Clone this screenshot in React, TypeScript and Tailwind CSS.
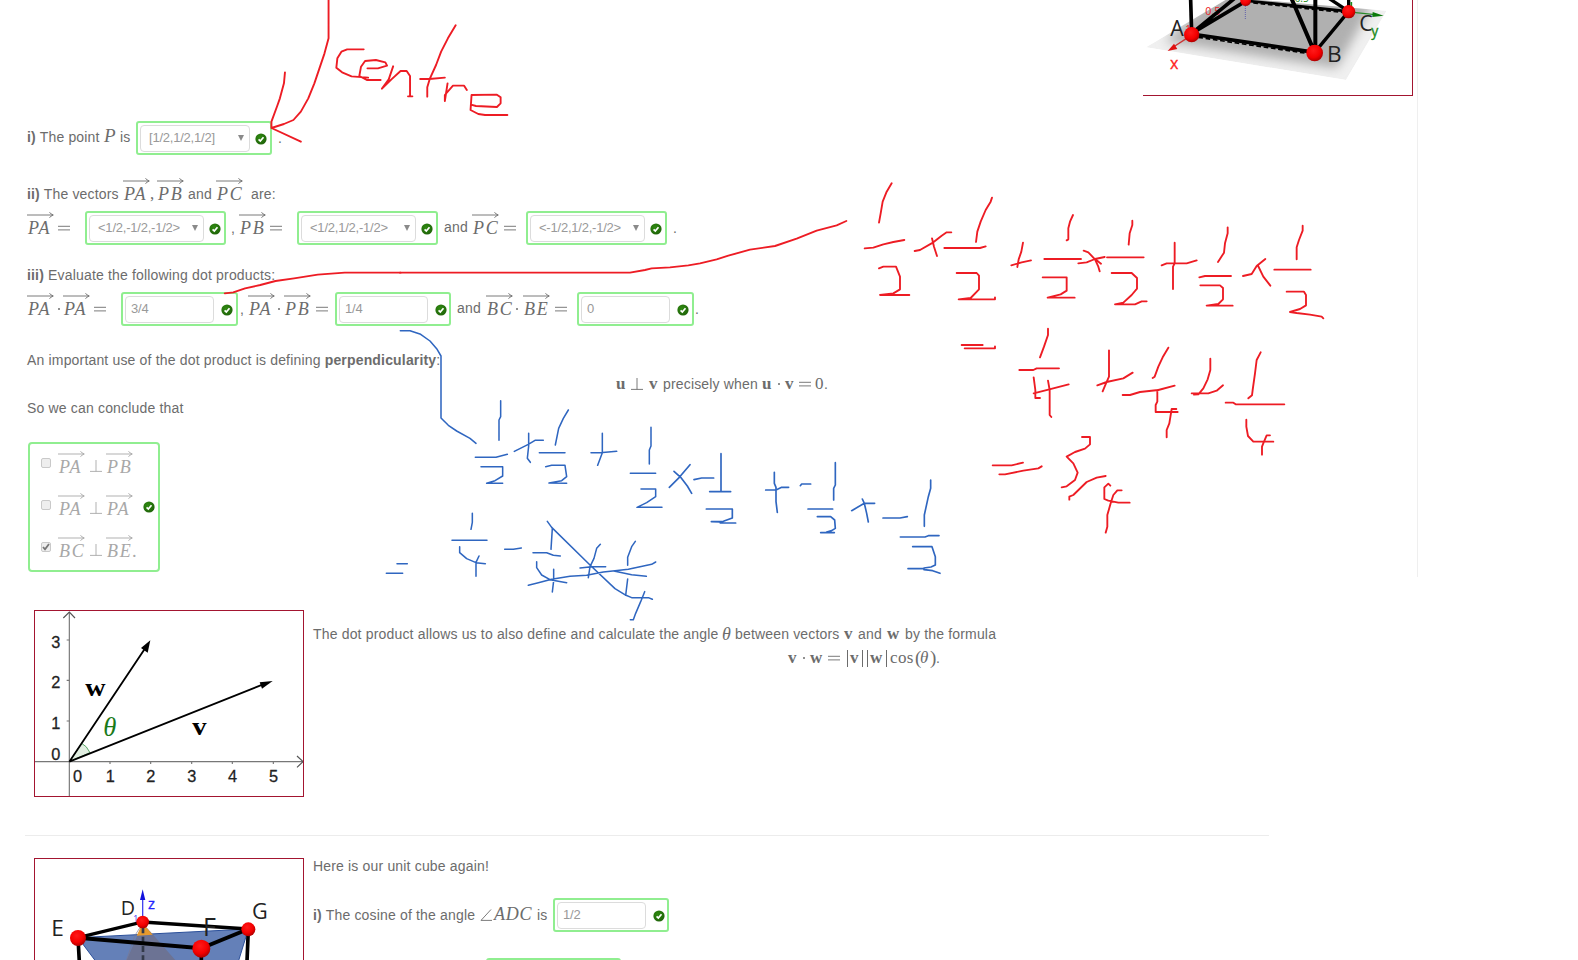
import React from "react";

type Kids = { children?: React.ReactNode; className?: string };

const Check = ({ className = "" }: { className?: string }) => (
  <svg className={`h-3 w-3 shrink-0 ${className}`} viewBox="0 0 12 12">
    <defs>
      <radialGradient id="checkFill" cx="0.4" cy="0.35" r="0.75">
        <stop offset="0" stopColor="#2f8a10" />
        <stop offset="1" stopColor="#1d5f08" />
      </radialGradient>
    </defs>
    <circle cx="6" cy="6" r="5.6" fill="url(#checkFill)" />
    <path d="M3.6 6.3 5.3 8 8.5 4.2" fill="none" stroke="#fff" strokeWidth="1.7" />
  </svg>
);

const Frame = ({ children, className = "" }: Kids) => (
  <div className={`box-border flex h-[34px] shrink-0 items-start rounded-[3px] border-2 border-[#90ee90] bg-white pt-0.5 pl-0.5 ${className}`}>
    {children}
  </div>
);

const Select = ({ value, className = "" }: { value: string; className?: string }) => (
  <Frame className={className}>
    <div className="box-border flex h-[27px] flex-1 items-center justify-between rounded-[4px] border border-[#dcdcdc] pr-[5px] pb-[2px] pl-[8px] text-[13px] leading-5 tracking-[-0.22px] text-[#999]">
      <span>{value}</span>
      <svg className="h-[6px] w-[6px]" viewBox="0 0 6 6">
        <path d="M0 0H6L3 6Z" fill="#8a8a8a" />
      </svg>
    </div>
    <Check className="mt-[8px] mr-[3px] ml-[5px]" />
  </Frame>
);

const Input = ({ value, className = "" }: { value: string; className?: string }) => (
  <Frame className={className}>
    <div className="box-border flex h-[27px] w-[89px] items-center rounded-[4px] border border-[#dcdcdc] pb-[2px] pl-[5px] text-[13px] leading-5 tracking-[-0.22px] text-[#999]">
      {value}
    </div>
    <Check className="mt-[8px] ml-[7px]" />
  </Frame>
);

const T = ({ children, className = "" }: Kids) => (
  <span className={`block shrink-0 whitespace-pre text-[14px] leading-5 tracking-[0.17px] ${className}`}>{children}</span>
);

const M = ({ children, className = "" }: Kids) => (
  <span className={`-mt-px block shrink-0 whitespace-pre font-['Liberation_Serif',serif] text-[17px] leading-5 ${className}`}>
    {children}
  </span>
);

const Vec = ({ children, className = "w-[27px]" }: Kids) => (
  <span className={`-mt-px flex shrink-0 flex-col pb-[6px] ${className}`}>
    <svg className="h-[6px] w-[27px]" viewBox="0 0 27 6">
      <path d="M0 3H26M22.5 0.2Q24 2.4 26.3 3Q24 3.6 22.5 5.8" fill="none" stroke="currentColor" strokeWidth="0.9" />
    </svg>
    <span className="pl-px font-['Liberation_Serif',serif] text-[18px] leading-5 tracking-[1.8px] italic">{children}</span>
  </span>
);

const Eq = ({ className = "w-[12px]" }: { className?: string }) => (
  <span className={`block shrink-0 ${className}`}>
    <svg className="h-[6px] w-[12px]" viewBox="0 0 12 6">
      <path d="M0 1.3H12M0 4.9H12" stroke="currentColor" strokeWidth="0.9" />
    </svg>
  </span>
);

const Dot = ({ className = "" }: { className?: string }) => (
  <span className={`block shrink-0 ${className}`}>
    <svg className="h-[2px] w-[2px]" viewBox="0 0 2 2">
      <circle cx="1" cy="1" r="1" fill="currentColor" />
    </svg>
  </span>
);

const Perp = ({ className = "" }: { className?: string }) => (
  <span className={`block shrink-0 ${className}`}>
    <svg className="h-[12px] w-[12px]" viewBox="0 0 12 12">
      <path d="M6 0V11.5M0 11.4H12" stroke="currentColor" strokeWidth="0.9" fill="none" />
    </svg>
  </span>
);

const Choice = ({ a, b, on = false }: { a: string; b: React.ReactNode; on?: boolean }) => (
  <div className="flex h-[42px] items-center pt-[3px] pl-[11px]">
    <span className="mt-[-8px] mr-[7px] flex h-[10px] w-[10px] shrink-0 items-center justify-center rounded-[2px] border border-[#c9c9c9] bg-[#eeeeee]">
      {on && (
        <svg className="h-[8px] w-[8px]" viewBox="0 0 8 8">
          <path d="M1 4 3 6.3 7 1" fill="none" stroke="#777" strokeWidth="1.8" />
        </svg>
      )}
    </span>
    <Vec className="mt-px w-[32px]">{a}</Vec>
    <Perp className="mb-px w-[16px]" />
    <Vec className="mt-px w-[36px]">{b}</Vec>
  </div>
);

const Ball = ({ x, y, r }: { x: number; y: number; r: number }) => <circle cx={x} cy={y} r={r} fill="url(#ball)" />;

const BaseFigure = () => (
  <svg className="block h-[95px] w-[269px] font-['Open_Sans',sans-serif]" viewBox="69 0 807 285">
    <defs>
      <radialGradient id="ball" cx="0.42" cy="0.35" r="0.7">
        <stop offset="0" stopColor="#ff1a1a" />
        <stop offset="0.6" stopColor="#f40000" />
        <stop offset="1" stopColor="#a00000" />
      </radialGradient>
      <filter id="haze" x="-15%" y="-15%" width="130%" height="130%">
        <feGaussianBlur stdDeviation="16" />
      </filter>
      <clipPath id="plane">
        <path d="M78 142L330 -8L800 32L678 240Z" />
      </clipPath>
    </defs>
    <g clipPath="url(#plane)">
      <path d="M78 142L330 -8L800 32L678 240Z" fill="#f0f0f0" />
      <path d="M135 125L320 -50L760 10L650 205Z" fill="#b0b0b0" filter="url(#haze)" />
    </g>
    <path d="M376 0V60" stroke="#3a3aa8" strokeWidth="2" strokeDasharray="3 3" />
    <text x="256" y="44" fontSize="32" fill="#e22">0.5</text>
    <text x="524" y="7" fontSize="30" fill="#1a8a1a">0.5</text>
    <text x="196" y="98" fontSize="30" fill="#e22">1</text>
    <g stroke="#000" fill="none">
      <path d="M212 0L215 100" strokeWidth="11" />
      <path d="M215 100L350 -10M215 100L376 4" strokeWidth="11" />
      <path d="M215 102L584 157" strokeWidth="11" />
      <path d="M235 112L560 160" strokeWidth="5" strokeDasharray="14 8" />
      <path d="M512 -10L584 157M586 0V150" strokeWidth="12" />
      <path d="M584 157L686 34M686 0V34M622 -8L686 34" strokeWidth="10" />
      <path d="M376 2L686 34" strokeWidth="8" />
      <path d="M400 8L670 37" strokeWidth="6" strokeDasharray="14 8" />
    </g>
    <path d="M200 115L160 141" stroke="#c33" strokeWidth="4" />
    <path d="M143 153L162 131L172 147Z" fill="#e01010" />
    <path d="M700 37L765 44" stroke="#2a8a2a" strokeWidth="4" />
    <path d="M791 47L758 36L757 51Z" fill="#0a7a0a" />
    <path d="M694 6V24" stroke="#1a8a1a" strokeWidth="5" />
    <Ball x={215} y={104} r={23} />
    <Ball x={377} y={2} r={16} />
    <Ball x={584} y={159} r={25} />
    <Ball x={686} y={35} r={20} />
    <g fill="#222" fontSize="64">
      <text x="151" y="109">A</text>
      <text x="621" y="187" fontSize="68">B</text>
      <text x="718" y="92">C</text>
    </g>
    <text x="150" y="208" fontSize="48" fill="#f22" stroke="#f22">x</text>
    <text x="754" y="107" fontSize="42" fill="#1a8a1a" stroke="#1a8a1a">y</text>
  </svg>
);

const Graph = () => (
  <svg className="block h-[185px] w-[268px] font-['Liberation_Sans',sans-serif]" viewBox="45 63 804 555">
    <path d="M148 515L185 460Q200 467 210 488Z" fill="#e2efe2" stroke="#3f9a4f" strokeWidth="2.5" />
    <g stroke="#777" strokeWidth="3.5" fill="none">
      <path d="M148 66V618M45 515H849" />
      <path d="M130 84L148 66L165 84M831 498L849 515L831 532" stroke="#555" />
      <path d="M140 150H148M140 271H148M140 393H148M270 515V522M392 515V522M515 515V522M637 515V522M760 515V522" />
    </g>
    <g stroke="#000" strokeWidth="5.5">
      <path d="M148 515L380 168M148 515L735 281" />
    </g>
    <path d="M391 151L383 188L363 174Z" fill="#000" />
    <path d="M758 273L726 296L719 277Z" fill="#000" />
    <g fill="#222" stroke="#222" strokeWidth="0.8" fontSize="49">
      <text x="94" y="175">3</text>
      <text x="94" y="295">2</text>
      <text x="94" y="417">1</text>
      <text x="94" y="509">0</text>
      <text x="159" y="577">0</text>
      <text x="257" y="577">1</text>
      <text x="379" y="577">2</text>
      <text x="502" y="577">3</text>
      <text x="624" y="577">4</text>
      <text x="747" y="577">5</text>
    </g>
    <g className="font-['Liberation_Serif',serif]">
      <text x="196" y="317" fontSize="73" fontWeight="700" textLength="61" lengthAdjust="spacingAndGlyphs">w</text>
      <text x="517" y="434" fontSize="73" fontWeight="700" textLength="43" lengthAdjust="spacingAndGlyphs">v</text>
      <text x="250" y="439" fontSize="80" fontStyle="italic" fill="#1a7a1a">θ</text>
    </g>
  </svg>
);

const CubeFigure = () => (
  <svg className="block h-[101px] w-[268px] font-['Open_Sans',sans-serif]" viewBox="45 117 804 303">
    <path d="M174 353L685 327L655 425H228Z" fill="#6480b8" stroke="#2a4f9a" strokeWidth="3" />
    <path d="M368 310L400 345L470 425H318Z" fill="#6c7394" />
    <path d="M368 310L398 344L350 347Z" fill="#e69a2e" />
    <path d="M368 310L345 346L318 425" fill="none" stroke="#7d7890" strokeWidth="2" />
    <path d="M368 235V300" stroke="#44e" strokeWidth="4" />
    <path d="M368 208L376 240H360Z" fill="#11d" />
    <path d="M369 322V425" stroke="#333a4a" strokeWidth="8" strokeDasharray="18 10" />
    <g stroke="#000" strokeWidth="11" fill="none">
      <path d="M174 353L368 306L685 327" strokeWidth="10" />
      <path d="M174 353L544 385L685 327" strokeWidth="12" />
      <path d="M174 353L178 425M685 327L681 425M544 385V425" />
    </g>
    <text x="340" y="305" fontSize="26" fill="#33e">1</text>
    <Ball x={174} y={354} r={24} />
    <Ball x={368} y={306} r={19} />
    <Ball x={685} y={328} r={21} />
    <Ball x={544} y={386} r={27} />
    <g fill="#222" fontSize="65">
      <text x="94" y="347" fontSize="68">E</text>
      <text x="302" y="285" fontSize="59">D</text>
      <text x="549" y="347" fontSize="75">F</text>
      <text x="696" y="297">G</text>
    </g>
    <text x="384" y="268" fontSize="44" fill="#22f" stroke="#22f">z</text>
  </svg>
);

const redWord =
  "M972 0V115L960 160L945 205L930 250L912 295L890 335L868 360L840 372L803 384M843 217L840 250L828 295L820 318L803 365V384L890 425M1076 148H1027L1010 155L998 175L995 203L1012 217L1040 229L1089 233M1087 205H1118L1145 197L1140 187L1112 180L1080 183L1068 200L1063 228L1085 240H1126M1163 199L1150 238L1130 266L1158 238L1185 213H1203L1213 228V288M1207 289H1220M1348 76L1325 115L1305 155L1290 195L1272 235L1264 262V290M1243 237H1270L1316 233M1324 250L1316 303V285L1340 257H1373L1381 270M1393 314L1408 318L1470 321L1481 310V292L1470 284L1395 285L1392 330L1415 342L1435 345H1501M665 880L690 877L725 865L770 855L815 843L870 835L940 824L1020 818H1185";

const redLine =
  "M0 278H690L735 270L755 265L810 262L865 256L900 250L950 238L985 227L1050 209L1125 198L1190 176L1250 152L1310 136L1339 123";

const redSums =
  "M155 70L140 95L128 125L122 160L117 188M74 265L100 263L130 253L160 246L193 240M117 325L130 320H168L180 350V388L160 400L120 405H208M224 273L240 270L280 247L305 227L320 217H334M276 235L282 260L291 288M456 113L452 125L437 150L422 185L412 215L408 246M313 264H420L437 259M350 339H410L417 347V388L392 414L356 418H465V412M549 248L544 275L536 298L532 321M514 316L545 307L573 301M699 165L690 185L685 205V238L680 241M613 297H723M608 352H680V392L662 403L623 413H704M731 272L745 277L765 298L775 320L779 334M715 310L740 307L765 297L794 291M765 297L783 311M877 182V195L869 220L866 254M801 292H911M815 339H875L891 354V386L875 405L850 428L825 433H885L905 424H920M1004 248V310L999 320V387M965 316L980 310H1040L1070 301M1163 202V220L1155 250L1152 278L1134 306M1078 352L1095 348H1173M1081 376H1140L1149 384V418L1135 432L1100 437H1178M1209 348L1235 342L1250 318L1276 297M1253 315L1270 350L1291 377M1388 197V212L1377 240L1370 262V298M1303 329H1412M1340 395H1392L1398 405V436L1380 447L1350 456L1370 459L1410 464L1445 470L1450 475M365 555H428M374 565H465V559M624 506V525L612 560L600 592M538 630H580L590 625H657M581 652L586 690V714H600M581 700L628 688L686 673M624 662L629 690V765L634 771M807 571V650L798 670L788 694M772 676L800 666L850 655L878 638M985 563L968 592L955 620L944 650L938 654M848 705H870L900 696L955 690L1004 677M952 690V725L947 735V756H1013M1009 747H995L988 790L980 810V832M1111 596V630L1103 658L1090 685L1075 703L1062 704M1055 700H1105L1130 692L1149 676M1262 577L1250 600L1245 640L1238 690L1236 706L1225 715M1157 728H1180L1187 733H1333M1219 779V800L1224 828L1240 845H1300M1290 826H1280L1272 845L1266 860V884M458 916H515L549 908M478 943H495L550 932L595 925L605 919M726 831H750V853L735 866L705 876L680 890L700 910L713 938L705 960L680 979L665 982M688 1019V1010L700 1005L740 966L770 953L797 948M811 977L805 971L793 982V1017L805 1022L835 1028H869M845 991H832L820 1005L812 1030L802 1065V1100L797 1118";

const blueLeft =
  "M91 32H120L152 43L180 63L200 86L213 108V294L235 316L260 333L300 355L318 370M392 242V290L387 300V361M316 412H378L412 403M333 440H398V468L375 482L350 490H398M433 394L475 373L495 361H520M476 340V378L472 415L481 427M595 270L580 295L566 325L556 375M508 398H585M527 440L545 436H585L590 470L575 482L537 489L590 490M697 340V398L683 436M663 398H690L740 394M843 322V378L838 390V432M781 460H857M813 507H857V530L830 548L801 562H876M307 580V607L303 628M246 661H351M269 680V698L290 716L318 728L346 731M327 708L318 727V769M49 760H98M81 731H112M404 688H430L454 684M489 698H530L550 706L571 708M547 625L543 688M500 725V743L515 765L540 779L590 788M551 748V782L547 816M532 604L545 622L660 735L735 806L768 826L785 833H835L847 838M475 796L505 788L545 778L600 769L650 766L700 756L735 752L775 748L810 740L845 733L857 726M735 754L785 764L829 769M691 673L680 685L672 715L660 740L655 773M630 744L665 740H707M796 664L785 680L773 712V736M773 777L767 826M824 815L812 845L797 880L790 899H781";

const blueRight =
  "M270 194L238 232L208 262M222 214L242 232L262 258L275 280M282 239L305 234H341M363 161V275M329 275H392M319 327H397V354L370 364L334 365L360 366L361 369H407M523 217V250L528 262V305L532 337M497 270H528L545 262H566M601 257L605 252H632M706 188V255L701 265V300M624 327H698M652 350H692L704 360L706 385L695 392L680 396M662 398H703M755 332L793 310H824M787 297L793 310L800 340L805 366M849 354H900L922 350M992 240V265L985 290L973 345V379M901 411H975L985 407H1017M938 440H996L1006 470V495L993 501L972 504M924 506H972M972 509L998 512L1020 520";

const Ink = () => (
  <svg className="pointer-events-none absolute inset-0 h-[960px] w-[1578px]" viewBox="0 0 1578 960">
    <g fill="none" stroke="#ed1c24" strokeWidth="5.6" strokeLinejoin="round" strokeLinecap="round">
      <path d={redWord} transform="scale(0.33803 0.33333)" />
      <path d={redLine} transform="translate(400 180) scale(0.33333)" />
      <path d={redSums} transform="translate(840 160) scale(0.33333)" />
    </g>
    <g fill="none" stroke="#2f66c0" strokeLinejoin="round" strokeLinecap="round">
      <path d={blueLeft} strokeWidth="4.6" transform="translate(370 320) scale(0.33333)" />
      <path d={blueRight} strokeWidth="5" transform="translate(600 400) scale(0.33333)" />
    </g>
  </svg>
);

export default function App() {
  return (
    <main className="relative h-[960px] w-[1578px] overflow-hidden bg-white font-['Liberation_Sans',sans-serif] text-[#6c6c6c]">
      <section className="flex h-[577px]">
        <div className="flex w-[1143px] shrink-0 flex-col pt-[121px] pl-[27px]">
          <div className="flex h-[34px] items-center">
            <T className="mb-[2px] w-[77px] tracking-[0.05px]"><b>i)</b> The point </T>
            <M className="mb-[3px] w-[16px] text-[19px] italic">P</M>
            <T className="mb-[2px] w-[16px]">is</T>
            <Select value="[1/2,1/2,1/2]" className="w-[136px]" />
            <T className="ml-[6px]">.</T>
          </div>

          <div className="mt-[27px] flex h-6 items-center">
            <T className="w-[96px]"><b>ii)</b> The vectors </T>
            <Vec className="w-[27px]">PA</Vec>
            <M className="w-[7px]">,</M>
            <Vec className="w-[31px]">PB</Vec>
            <T className="w-[28px]">and</T>
            <Vec className="w-[35px]">PC</Vec>
            <T>are:</T>
          </div>
          <div className="mt-[5px] flex h-[34px] items-center">
            <Vec className="w-[31px]">PA</Vec>
            <Eq className="w-[27px]" />
            <Select value="<1/2,-1/2,-1/2>" className="w-[141px]" />
            <T className="mb-px ml-[5px] w-[8px]">,</T>
            <Vec className="w-[31px]">PB</Vec>
            <Eq className="w-[27px]" />
            <Select value="<1/2,1/2,-1/2>" className="w-[141px]" />
            <T className="mb-[2px] ml-[6px] w-[28px]">and</T>
            <Vec className="w-[32px]">PC</Vec>
            <Eq className="w-[22px]" />
            <Select value="<-1/2,1/2,-1/2>" className="w-[141px]" />
            <T className="ml-[6px]">.</T>
          </div>

          <div className="mt-[18px] flex h-6 items-center">
            <T><b>iii)</b> Evaluate the following dot products:</T>
          </div>
          <div className="mt-[5px] flex h-[34px] items-center">
            <Vec className="w-[31px]">PA</Vec>
            <Dot className="w-[5px]" />
            <Vec className="w-[31px]">PA</Vec>
            <Eq className="w-[27px]" />
            <Input value="3/4" className="w-[117px]" />
            <T className="ml-[2px] w-[8px]">,</T>
            <Vec className="w-[30px]">PA</Vec>
            <Dot className="w-[6px]" />
            <Vec className="w-[32px]">PB</Vec>
            <Eq className="w-[19px]" />
            <Input value="1/4" className="w-[116px]" />
            <T className="mb-[2px] ml-[6px] w-[29px]">and</T>
            <Vec className="w-[30px]">BC</Vec>
            <Dot className="w-[7px]" />
            <Vec className="w-[32px]">BE</Vec>
            <Eq className="w-[22px]" />
            <Input value="0" className="w-[117px]" />
            <T className="ml-px">.</T>
          </div>

          <div className="mt-[22px] flex h-6 items-center">
            <T>An important use of the dot product is defining <b>perpendicularity</b>:</T>
          </div>
          <div className="flex h-6 items-center pl-[589px]">
            <M className="w-[15px] font-bold">u</M>
            <Perp className="w-[18px]" />
            <M className="w-[14px] font-bold">v</M>
            <T className="w-[99px]">precisely when </T>
            <M className="w-[16px] font-bold">u</M>
            <Dot className="w-[7px]" />
            <M className="w-[14px] font-bold">v</M>
            <Eq className="w-[16px]" />
            <M className="w-[9px]">0</M>
            <T>.</T>
          </div>
          <div className="flex h-6 items-center">
            <T>So we can conclude that</T>
          </div>

          <div className="mt-[22px] ml-px box-border flex h-[130px] w-[132px] items-center rounded-[4px] border-2 border-[#90ee90]">
            <div className="w-[113px] text-[#a8a8a8]">
              <Choice a="PA" b="PB" />
              <Choice a="PA" b="PA" />
              <Choice a="BC" b="BE." on />
            </div>
            <Check />
          </div>
        </div>

        <aside className="box-border h-[577px] w-[275px] shrink-0 border-r border-[#efefef]">
          <div className="h-[96px] w-[270px] border-r border-b border-[#a31530]">
            <BaseFigure />
          </div>
        </aside>
      </section>

      <section className="flex pt-[33px] pl-[34px]">
        <div className="h-[187px] w-[270px] shrink-0 border border-[#a31530]">
          <Graph />
        </div>
        <div className="ml-[9px] flex flex-col pt-3">
          <div className="flex h-6 items-center">
            <T className="w-[409px]">The dot product allows us to also define and calculate the angle </T>
            <M className="w-[13px] text-[18px] italic">θ</M>
            <T className="w-[109px]">between vectors </T>
            <M className="w-[14px] font-bold">v</M>
            <T className="w-[29px]">and</T>
            <M className="w-[18px] font-bold">w</M>
            <T>by the formula</T>
          </div>
          <div className="flex h-6 items-center pl-[475px]">
            <M className="w-[15px] font-bold">v</M>
            <Dot className="w-[7px]" />
            <M className="w-[18px] font-bold">w</M>
            <Eq className="w-[19px]" />
            <span className="mr-[2px] h-[17px] w-px bg-current" />
            <M className="w-[12px] font-bold">v</M>
            <span className="h-[17px] w-px bg-current" />
            <span className="mr-[2px] ml-[4px] h-[17px] w-px bg-current" />
            <M className="w-[16px] font-bold">w</M>
            <span className="h-[17px] w-px bg-current" />
            <M className="ml-[3px] w-[25px] tracking-[0.4px]">cos</M>
            <M className="w-[5px] text-[19px]">(</M>
            <M className="w-[10px] italic">θ</M>
            <M className="w-[6px] text-[19px]">)</M>
            <T>.</T>
          </div>
        </div>
      </section>

      <hr className="mt-[38px] ml-[25px] h-px w-[1244px] border-0 bg-[#ececec]" />

      <section className="flex h-[124px] items-start pt-[22px] pl-[34px]">
        <div className="h-[110px] w-[270px] shrink-0 border border-[#a31530]">
          <CubeFigure />
        </div>
        <div className="-mt-1 ml-[9px] flex flex-col">
          <div className="flex h-6 shrink-0 items-center">
            <T>Here is our unit cube again!</T>
          </div>
          <div className="mt-[20px] flex h-[34px] shrink-0 items-center">
            <T className="mb-px w-[167px]"><b>i)</b> The cosine of the angle </T>
            <svg className="mr-[2px] mb-px h-[12px] w-[12px] shrink-0" viewBox="0 0 12 12">
              <path d="M11 0.5 1 11.4H12" fill="none" stroke="currentColor" strokeWidth="0.9" />
            </svg>
            <M className="mb-px w-[43px] text-[18px] tracking-[0.8px] italic">ADC</M>
            <T className="mb-px w-[16px]">is</T>
            <Input value="1/2" className="w-[116px]" />
          </div>
          <Frame className="mt-[26px] ml-[173px] w-[135px]" />
        </div>
      </section>

      <Ink />
    </main>
  );
}
